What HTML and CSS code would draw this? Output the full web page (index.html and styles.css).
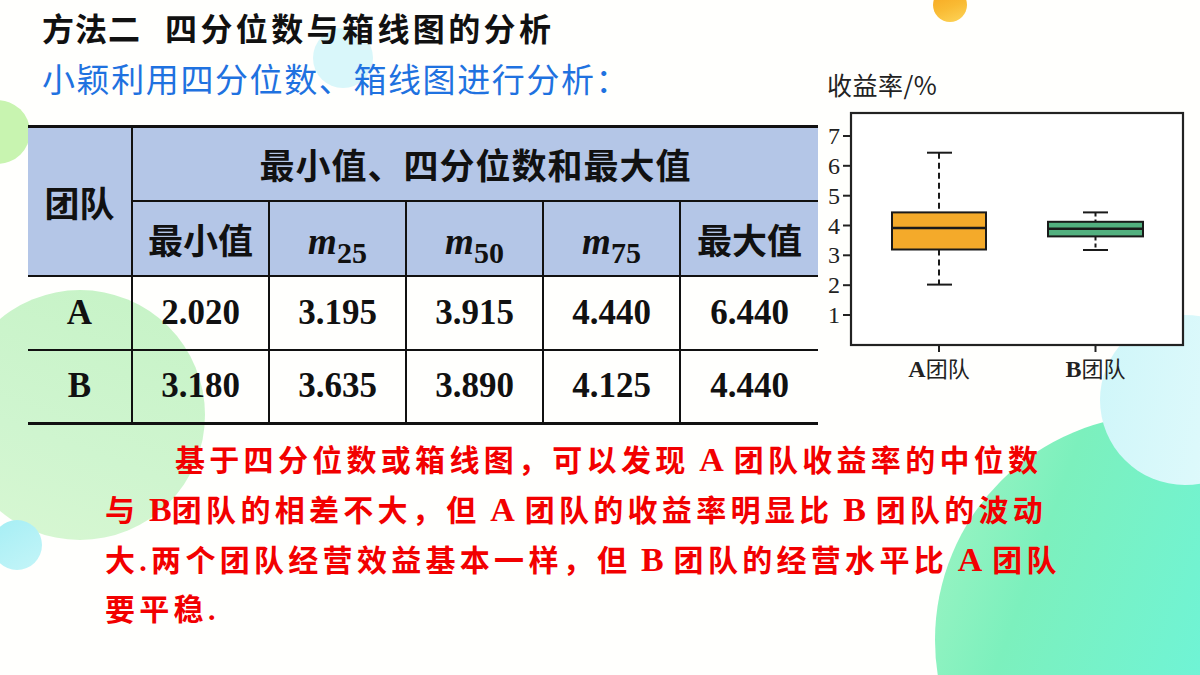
FILE: index.html
```html
<!DOCTYPE html>
<html lang="zh-CN">
<head>
<meta charset="utf-8">
<title>四分位数与箱线图的分析</title>
<link rel="stylesheet" href="styles.css">
</head>
<body>
<div class="slide">
  <div class="bg" aria-hidden="true">
    <span class="blob blob-orange"></span>
    <span class="blob blob-tl"></span>
    <span class="blob blob-title"></span>
    <span class="blob blob-left"></span>
    <span class="blob blob-left-cyan"></span>
    <span class="blob blob-teal"></span>
    <span class="blob blob-pale"></span>
  </div>

  <div class="content">
    <div class="top">
      <div class="left">
        <h1 class="title"><span class="t1">方法二</span><span class="t2">四分位数与箱线图的分析</span></h1>
        <p class="subtitle">小颖利用四分位数、箱线图进行分析：</p>
        <table class="stats">
          <colgroup>
            <col class="c-team"><col class="c-val"><col class="c-val"><col class="c-val"><col class="c-val"><col class="c-last">
          </colgroup>
          <thead>
            <tr class="h1">
              <th rowspan="2" class="first">团队</th>
              <th colspan="5" class="span-head">最小值、四分位数和最大值</th>
            </tr>
            <tr class="h2">
              <th>最小值</th>
              <th class="m"><i>m</i><sub>25</sub></th>
              <th class="m"><i>m</i><sub>50</sub></th>
              <th class="m"><i>m</i><sub>75</sub></th>
              <th>最大值</th>
            </tr>
          </thead>
          <tbody>
            <tr>
              <td class="first">A</td><td>2.020</td><td>3.195</td><td>3.915</td><td>4.440</td><td>6.440</td>
            </tr>
            <tr>
              <td class="first">B</td><td>3.180</td><td>3.635</td><td>3.890</td><td>4.125</td><td>4.440</td>
            </tr>
          </tbody>
        </table>
      </div>

      <div class="chart">
        <div class="chart-label">收益率/%</div>
        <svg class="plot" width="382" height="290" viewBox="0 0 382 290">
          <g class="ticks" stroke="#222" stroke-width="2">
            <line x1="25" y1="37" x2="33" y2="37"/>
            <line x1="25" y1="66.8" x2="33" y2="66.8"/>
            <line x1="25" y1="96.7" x2="33" y2="96.7"/>
            <line x1="25" y1="126.5" x2="33" y2="126.5"/>
            <line x1="25" y1="156.3" x2="33" y2="156.3"/>
            <line x1="25" y1="186.2" x2="33" y2="186.2"/>
            <line x1="25" y1="216" x2="33" y2="216"/>
            <line x1="121" y1="246" x2="121" y2="253"/>
            <line x1="277.5" y1="246" x2="277.5" y2="253"/>
          </g>
          <g class="ylabels">
            <text x="22" y="45">7</text>
            <text x="22" y="74.8">6</text>
            <text x="22" y="104.7">5</text>
            <text x="22" y="134.5">4</text>
            <text x="22" y="164.3">3</text>
            <text x="22" y="194.2">2</text>
            <text x="22" y="224">1</text>
          </g>
          <rect x="33" y="14" width="332" height="232" fill="#fff" stroke="#222" stroke-width="2.2"/>
          <!-- Team A -->
          <g stroke="#1a1a1a" stroke-width="2">
            <line x1="121" y1="53.7" x2="121" y2="113.4" stroke-dasharray="6 4"/>
            <line x1="121" y1="150.5" x2="121" y2="185.6" stroke-dasharray="6 4"/>
            <line x1="109" y1="53.7" x2="134" y2="53.7"/>
            <line x1="109" y1="185.6" x2="134" y2="185.6"/>
            <rect x="74" y="113.4" width="94" height="37.1" fill="#f4aa2a"/>
            <line x1="74" y1="129" x2="168" y2="129" stroke-width="2.6"/>
          </g>
          <!-- Team B -->
          <g stroke="#1a1a1a" stroke-width="2">
            <line x1="277.5" y1="113.4" x2="277.5" y2="122.8" stroke-dasharray="4 3"/>
            <line x1="277.5" y1="137.4" x2="277.5" y2="151" stroke-dasharray="4 3"/>
            <line x1="265" y1="113.4" x2="290" y2="113.4"/>
            <line x1="265" y1="151" x2="290" y2="151"/>
            <rect x="230" y="122.8" width="95" height="14.6" fill="#52b07f"/>
            <line x1="230" y1="129.8" x2="325" y2="129.8" stroke-width="2.6"/>
          </g>
          <g class="xlabels">
            <text x="121" y="278"><tspan class="lat">A</tspan>团队</text>
            <text x="277.5" y="278"><tspan class="lat">B</tspan>团队</text>
          </g>
        </svg>
      </div>
    </div>

    <p class="note">基于四分位数或箱线图，可以发现 <span class="lat">A</span> 团队收益率的中位数<br>与 <span class="lat">B</span>团队的相差不大，但 <span class="lat">A</span> 团队的收益率明显比 <span class="lat">B</span> 团队的波动<br>大.两个团队经营效益基本一样，但 <span class="lat">B</span> 团队的经营水平比 <span class="lat">A</span> 团队<br>要平稳.</p>
  </div>
</div>
</body>
</html>
```
FILE: styles.css
```css
* { box-sizing: border-box; }

html, body {
  margin: 0;
  padding: 0;
  background: #fff;
}

.slide {
  position: relative;
  width: 1200px;
  height: 675px;
  overflow: hidden;
  background: #fffffd;
  font-family: "Noto Sans CJK SC", sans-serif;
}

/* decorative background shapes */
.bg {
  position: absolute;
  inset: 0;
  z-index: 0;
}

.blob {
  position: absolute;
  border-radius: 50%;
  display: block;
}

.blob-orange {
  left: 933px; top: -12px; width: 34px; height: 34px;
  background: linear-gradient(160deg, #f6a21d 0%, #f9bb34 55%, #fdd55a 100%);
}

.blob-tl {
  left: -36px; top: 100px; width: 66px; height: 64px;
  background: #c8f4b0;
}

.blob-title {
  left: 313px; top: 28px; width: 60px; height: 60px;
  background: #d9f7fa;
}

.blob-left {
  left: -45px; top: 290px; width: 250px; height: 250px;
  background: linear-gradient(200deg, #c6f3c6 0%, #cff5cf 60%, #d8f7d2 100%);
}

.blob-left-cyan {
  left: -8px; top: 520px; width: 50px; height: 50px;
  background: linear-gradient(150deg, #a5eef4, #c4f5f8);
}

.blob-teal {
  left: 935px; top: 415px; width: 450px; height: 450px;
  background: linear-gradient(110deg, #a4f5c4 0%, #7cf0bd 25%, #6ff4d6 60%, #62f7f6 100%);
}

.blob-pale {
  left: 1100px; top: 315px; width: 170px; height: 170px;
  background: linear-gradient(100deg, #cff6f9 0%, #dcf9fb 60%, #e8fbfd 100%);
}

/* content */
.content {
  position: relative;
  z-index: 1;
}

.top {
  display: flex;
  align-items: flex-start;
}

.left {
  width: 818px;
  padding: 7px 0 0 28px;
}

.title {
  margin: 0 0 0 14px;
  font-size: 32px;
  line-height: 40px;
  font-weight: 700;
  color: #111;
  white-space: nowrap;
}

.title .t1 { letter-spacing: 1px; }
.title .t2 { margin-left: 24px; letter-spacing: 3.4px; }

.subtitle {
  margin: 11px 0 0 14px;
  font-size: 33px;
  line-height: 40px;
  font-weight: 400;
  color: #1f72e0;
  letter-spacing: 1.6px;
  white-space: nowrap;
}

/* table */
.stats {
  margin-top: 27px;
  width: 790px;
  table-layout: fixed;
  border-collapse: collapse;
  border-top: 3px solid #111;
  border-bottom: 3px solid #111;
}

.stats col.c-team { width: 104px; }
.stats col.c-val { width: 137px; }
.stats col.c-last { width: 138px; }

.stats th,
.stats td {
  padding: 0;
  text-align: center;
  vertical-align: middle;
  border-left: 2px solid #111;
  border-top: 2px solid #111;
  color: #111;
}

.stats .first { border-left: none; }

.stats th {
  background: #b4c6e7;
  font-family: "Noto Sans CJK SC", sans-serif;
  font-weight: 700;
  font-size: 35px;
}

.stats th.span-head { letter-spacing: 1px; }

.stats tr.h1 { height: 74px; }
.stats tr.h2 { height: 75px; }
.stats tbody tr { height: 74px; }

.stats th.m {
  font-family: "Liberation Serif", "Times New Roman", serif;
  font-size: 37px;
  padding-top: 6px;
}

.stats th.m i { font-style: italic; font-weight: 700; }

.stats th.m sub {
  font-size: 30px;
  font-weight: 700;
  vertical-align: -9px;
  line-height: 0;
}

.stats td {
  font-family: "Liberation Serif", "Times New Roman", serif;
  font-weight: 700;
  font-size: 35px;
  background: transparent;
}

/* chart */
.chart {
  flex: 1;
  padding-top: 69px;
}

.chart-label {
  margin-left: 9px;
  font-size: 25px;
  line-height: 30px;
  color: #222;
  letter-spacing: 0.5px;
}

.plot {
  display: block;
}

.ylabels text {
  font-family: "Liberation Serif", "Times New Roman", serif;
  font-size: 24px;
  fill: #222;
  text-anchor: end;
}

.xlabels text {
  font-family: "Noto Sans CJK SC", sans-serif;
  font-size: 22px;
  fill: #222;
  text-anchor: middle;
}

.xlabels .lat {
  font-family: "Liberation Serif", "Times New Roman", serif;
  font-weight: 700;
  font-size: 24px;
}

/* conclusion */
.note {
  margin: 10px 0 0 105px;
  font-family: "Liberation Serif", "Noto Sans CJK SC", serif;
  font-weight: 700;
  font-size: 30px;
  line-height: 49px;
  letter-spacing: 4.3px;
  word-spacing: -2px;
  color: #f20000;
  text-indent: 70px;
  white-space: nowrap;
}

.note .lat {
  font-size: 34px;
  letter-spacing: 0;
}
```
